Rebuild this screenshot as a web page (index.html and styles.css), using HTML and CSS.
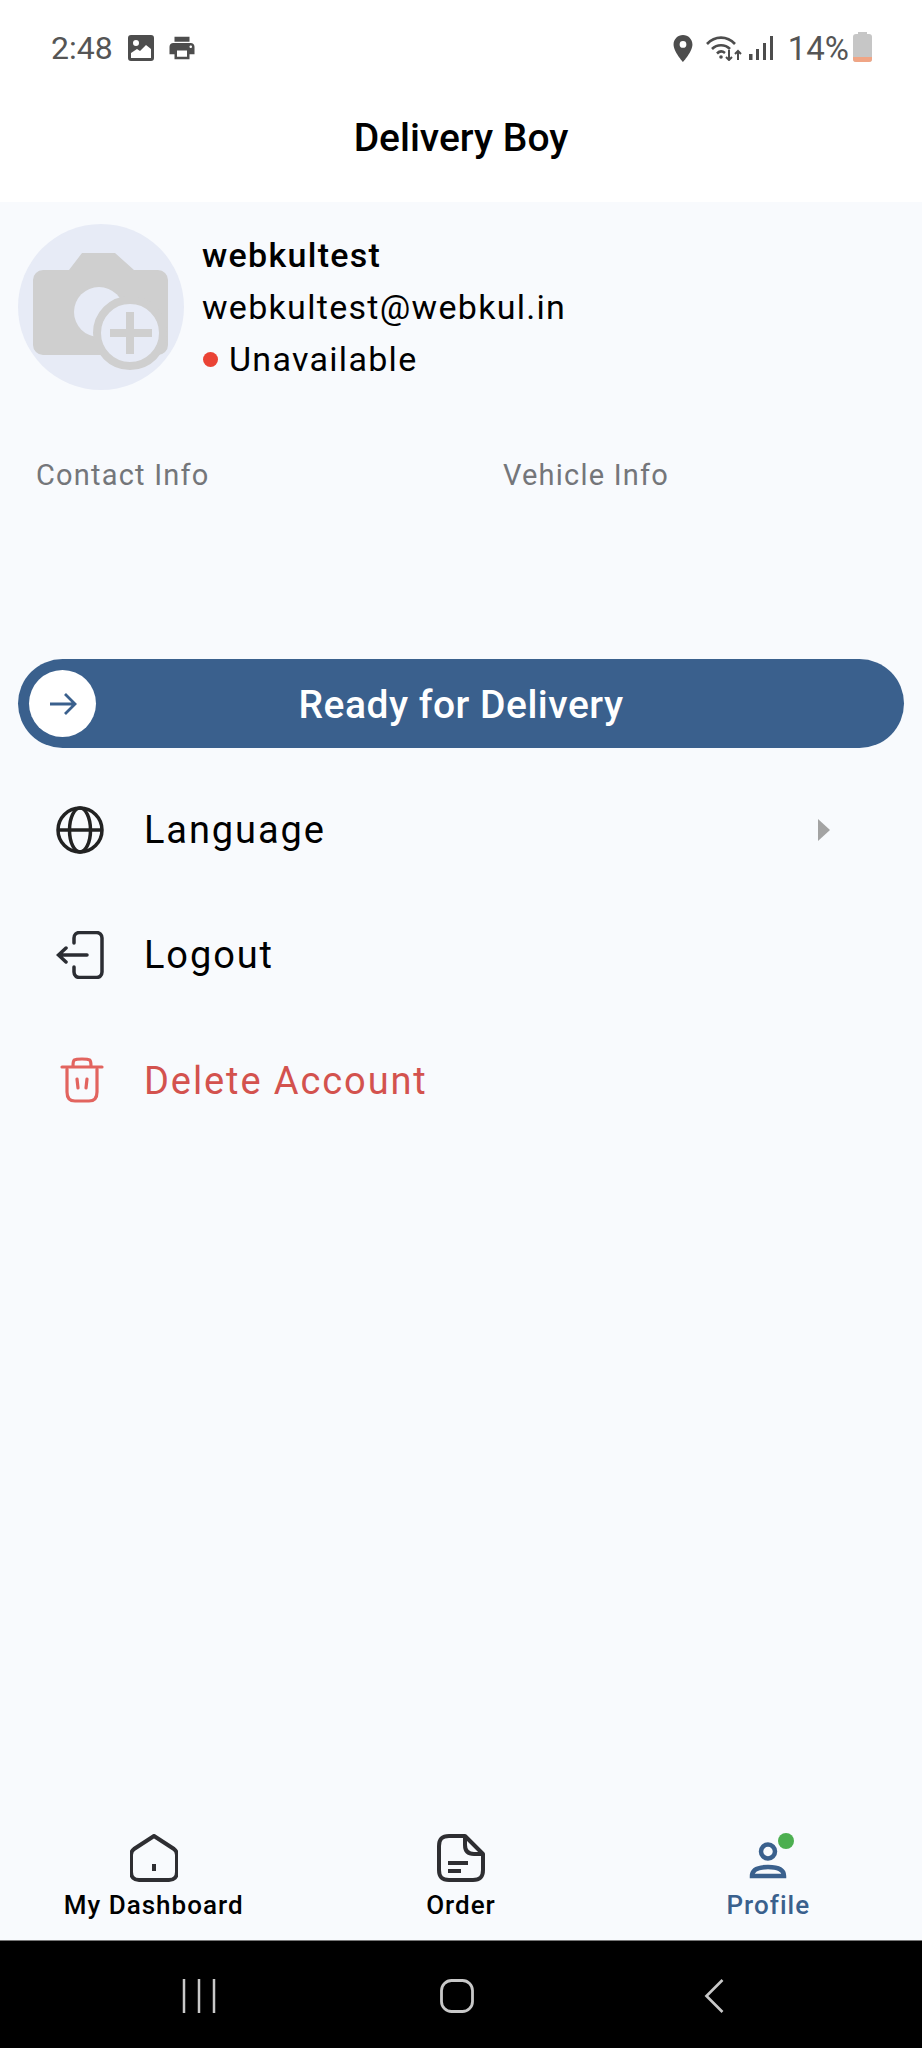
FILE: index.html
```html
<!DOCTYPE html>
<html lang="en">
<head>
    <meta charset="UTF-8">
    <meta name="viewport" content="width=device-width, initial-scale=1.0">
    <title>Delivery Boy</title>
    <link rel="stylesheet" href="styles.css">
</head>
<body>
    <header class="top">
        <div class="status">
            <span class="time">2:48</span>
            <svg class="status-icon" viewBox="0 0 26 26"><path fill="#4d4d4d" fill-rule="evenodd" d="M3 0h20a3 3 0 0 1 3 3v20a3 3 0 0 1-3 3H3a3 3 0 0 1-3-3V3a3 3 0 0 1 3-3zm5 5a3 3 0 1 0 0 6 3 3 0 0 0 0-6zM3 23h20v-9l-5-4-6 6-3-2-6 4z"/></svg>
            <svg class="status-icon print" viewBox="0 0 24 24"><path fill="#4d4d4d" d="M19 8H5c-1.66 0-3 1.34-3 3v6h4v4h12v-4h4v-6c0-1.66-1.34-3-3-3zm-3 11H8v-5h8v5zm3-7c-.55 0-1-.45-1-1s.45-1 1-1 1 .45 1 1-.45 1-1 1zm-1-9H6v4h12V3z"/></svg>
            <span class="status-gap"></span>
            <svg class="pin" viewBox="5 2 14 20"><path fill="#4d4d4d" d="M12 2C8.13 2 5 5.13 5 9c0 5.25 7 13 7 13s7-7.75 7-13c0-3.87-3.13-7-7-7zm0 9.5a2.5 2.5 0 1 1 0-5 2.5 2.5 0 0 1 0 5z"/></svg>
            <svg class="wifi" viewBox="0 0 36 26" fill="none" stroke="#4d4d4d" stroke-width="2.600">
                <path d="M1 9c8-8.500 20-8.500 28 0"/>
                <path d="M6 14c5-5 13-5 18 0"/>
                <path d="M11 18.500c2.500-2.500 5.500-2.500 8-.5"/>
                <circle cx="15" cy="22" r="1.800" fill="#4d4d4d" stroke="none"/>
                <path d="M23 15v10M20 22l3 3 3-3M32 25V16M29 19l3-3 3 3" stroke-width="2"/>
            </svg>
            <svg class="signal" viewBox="0 0 25 24"><path fill="#4d4d4d" d="M0 18h3.500v6H0zM7 13h3v11H7zM14 7h3v17h-3zM21 0h3v24h-3z"/></svg>
            <span class="battery-text">14%</span>
            <div class="battery"><span class="battery-cap"></span><span class="battery-level"></span></div>
        </div>
        <h1 class="title">Delivery Boy</h1>
    </header>

    <main class="content">
        <section class="profile">
            <div class="avatar">
                <svg viewBox="0 0 166 166">
                    <path fill="#cfcfcf" d="M25 46h26l13-17h33l19 17h24a10 10 0 0 1 10 10v65a10 10 0 0 1-10 10H25a10 10 0 0 1-10-10V56a10 10 0 0 1 10-10z"/>
                    <circle cx="81" cy="88" r="25" fill="#e7ebf6"/>
                    <circle cx="112" cy="109" r="33" fill="#e7ebf6" stroke="#cfcfcf" stroke-width="8"/>
                    <path fill="#cfcfcf" d="M92 105h16V88h8v17h18v8h-18v17h-8v-17H92z"/>
                </svg>
            </div>
            <div class="profile-text">
                <div class="name">webkultest</div>
                <div class="email">webkultest@webkul.in</div>
                <div class="state"><span class="dot"></span>Unavailable</div>
            </div>
        </section>

        <div class="info-row">
            <span class="info-label">Contact Info</span>
            <span class="info-label">Vehicle Info</span>
        </div>

        <div class="ready-btn">
            <span class="ready-knob">
                <svg viewBox="0 0 28 24" fill="none" stroke="#3a608d" stroke-width="2.800"><path d="M1 12h25M16 2l10 10-10 10"/></svg>
            </span>
            <span>Ready for Delivery</span>
        </div>

        <ul class="menu">
            <li class="menu-item">
                <svg class="menu-icon" viewBox="0 0 48 48" fill="none" stroke="#222" stroke-width="3.500">
                    <circle cx="24" cy="24" r="22"/>
                    <ellipse cx="24" cy="24" rx="10.500" ry="22"/>
                    <path d="M2 24h44"/>
                </svg>
                <span>Language</span>
                <span class="menu-arrow"></span>
            </li>
            <li class="menu-item">
                <svg class="menu-icon" viewBox="0 0 48 48" fill="none" stroke="#2b2d33" stroke-width="3.500" stroke-linecap="round">
                    <path d="M18 12V7a5.500 5.500 0 0 1 5.500-5.500h17A5.500 5.500 0 0 1 46 7v34a5.500 5.500 0 0 1-5.500 5.500h-17A5.500 5.500 0 0 1 18 41v-5"/>
                    <path d="M31 24H3M10 17l-7.500 7 7.500 7"/>
                </svg>
                <span>Logout</span>
            </li>
            <li class="menu-item danger">
                <svg class="menu-icon" viewBox="0 0 48 48" fill="none" stroke="#e2645f" stroke-width="3.200" stroke-linecap="round">
                    <path d="M6 10h40M17 9c0-7 1-7 9-7s9 0 9 7"/>
                    <path d="M11 12v23c0 6 3 9 8 9h14c5 0 8-3 8-9V12"/>
                    <path d="M21 22l1 9M31 22l-1 9"/>
                </svg>
                <span>Delete Account</span>
            </li>
        </ul>
    </main>

    <nav class="tabs">
        <div class="tab">
            <svg class="tab-icon" viewBox="0 0 48 48" fill="none" stroke="#2e2e32" stroke-width="4" stroke-linejoin="round">
                <path d="M24 2L44 15c2 1.500 3 3 3 6v17c0 5-3 8-8 8H9c-5 0-8-3-8-8V21c0-3 1-4.500 3-6z"/>
                <path d="M24 30v7" stroke-width="4"/>
            </svg>
            <span>My Dashboard</span>
        </div>
        <div class="tab">
            <svg class="tab-icon" viewBox="0 0 48 48" fill="none" stroke="#2e2e32" stroke-width="4" stroke-linejoin="round">
                <path d="M28 2H12C5 2 2 5 2 12v24c0 7 3 10 10 10h24c7 0 10-3 10-10V20z"/>
                <path d="M28 2v9c0 6 3 9 9 9h9"/>
                <path d="M11 29h20M11 37h13"/>
            </svg>
            <span>Order</span>
        </div>
        <div class="tab active">
            <span class="tab-icon profile-icon">
                <svg viewBox="0 0 48 48" fill="none" stroke="#3a608d" stroke-width="4.500">
                    <circle cx="24" cy="17.500" r="7"/>
                    <path d="M8 42c0-6 6-9 16-9s16 3 16 9z"/>
                </svg>
                <span class="badge"></span>
            </span>
            <span>Profile</span>
        </div>
    </nav>

    <div class="sys-nav">
        <svg class="sys-icon" viewBox="0 0 34 34" fill="none" stroke="#c8c8c8" stroke-width="2.500"><path d="M2 0v34M17 0v34M32 0v34"/></svg>
        <svg class="sys-icon" viewBox="0 0 34 34" fill="none" stroke="#c8c8c8" stroke-width="2.800"><rect x="1.500" y="1.500" width="31" height="31" rx="10"/></svg>
        <svg class="sys-icon" viewBox="0 0 34 36" fill="none" stroke="#c8c8c8" stroke-width="2.800"><path d="M26 1L9 18l17 17"/></svg>
    </div>
</body>
</html>
```

FILE: styles.css
```css
* {
    box-sizing: border-box;
}

body {
    font-family: Roboto, "Liberation Sans", sans-serif;
    margin: 0;
    padding: 0;
    height: 2048px;
    display: flex;
    flex-direction: column;
    background: #f8fafd;
    color: #000;
}

.top {
    background: #fff;
    height: 202px;
}

.status {
    display: flex;
    align-items: center;
    height: 96px;
    padding: 0 50px 0 51px;
    color: #555;
}

.time {
    font-size: 32px;
    margin-right: 15px;
}

.status-icon {
    width: 26px;
    height: 26px;
}

.status-icon.print {
    margin-left: 13px;
    width: 30px;
    height: 30px;
}

.status-gap {
    flex: 1;
}

.pin {
    width: 22px;
    height: 27px;
    margin-right: 12px;
}

.wifi {
    width: 36px;
    height: 26px;
    margin-right: 7px;
}

.signal {
    width: 25px;
    height: 24px;
    margin-right: 14px;
}

.battery-text {
    font-size: 33px;
    margin-right: 4px;
}

.battery {
    width: 19px;
    height: 28px;
    background: #c6c6c6;
    border-radius: 3px;
    position: relative;
    overflow: visible;
}

.battery-cap {
    position: absolute;
    top: -2px;
    left: 5px;
    width: 9px;
    height: 3px;
    background: #c6c6c6;
}

.battery-level {
    position: absolute;
    left: 0;
    right: 0;
    bottom: 0;
    height: 5px;
    background: #f0a585;
    border-radius: 0 0 3px 3px;
}

.title {
    margin: 0;
    text-align: center;
    font-size: 39px;
    font-weight: 500;
    line-height: 84px;
}

.content {
    flex: 1;
}

.profile {
    display: flex;
    align-items: center;
    padding: 22px 18px 0;
}

.avatar {
    width: 166px;
    height: 166px;
    border-radius: 50%;
    background: #e7ebf6;
    margin-right: 18px;
}

.avatar svg {
    display: block;
    width: 166px;
    height: 166px;
}

.profile-text {
    font-size: 34px;
    line-height: 52px;
    letter-spacing: 1.300px;
}

.name {
    font-weight: 500;
}

.state {
    display: flex;
    align-items: center;
}

.dot {
    width: 15px;
    height: 15px;
    border-radius: 50%;
    background: #ea4335;
    margin: 0 11px 0 1px;
}

.info-row {
    display: grid;
    grid-template-columns: 467px 1fr;
    margin-top: 65px;
    padding-left: 36px;
}

.info-label {
    font-size: 29px;
    line-height: 40px;
    letter-spacing: 1.200px;
    color: #74767a;
}

.ready-btn {
    position: relative;
    margin: 164px 18px 0;
    height: 89px;
    border-radius: 45px;
    background: #3a608d;
    color: #fff;
    font-size: 39px;
    font-weight: 500;
    letter-spacing: 0.500px;
    padding-top: 3px;
    display: flex;
    align-items: center;
    justify-content: center;
}

.ready-knob {
    position: absolute;
    left: 11px;
    top: 11px;
    width: 67px;
    height: 67px;
    border-radius: 50%;
    background: #fff;
    display: flex;
    align-items: center;
    justify-content: center;
}

.ready-knob svg {
    width: 28px;
    height: 24px;
}

.menu {
    list-style: none;
    margin: 19px 0 0;
    padding: 0 56px;
}

.menu-item {
    display: flex;
    align-items: center;
    height: 125.500px;
    font-size: 38px;
    letter-spacing: 1.900px;
}

.menu-item.danger {
    color: #d3524e;
}

.menu-icon {
    width: 48px;
    height: 48px;
    margin-right: 40px;
}

.menu-arrow {
    margin-left: auto;
    margin-right: 36px;
    border-left: 12px solid #a3a3a3;
    border-top: 11px solid transparent;
    border-bottom: 11px solid transparent;
}

.tabs {
    display: grid;
    grid-template-columns: repeat(3, 1fr);
    height: 120px;
}

.tab {
    display: flex;
    flex-direction: column;
    align-items: center;
    padding-top: 14px;
    font-size: 26px;
    font-weight: 500;
    letter-spacing: 1px;
    line-height: 46px;
}

.tab.active {
    color: #3a608d;
}

.tab-icon {
    display: block;
    width: 48px;
    height: 48px;
    flex: none;
}

.profile-icon {
    position: relative;
}

.profile-icon svg {
    display: block;
}

.badge {
    position: absolute;
    top: -1px;
    right: -2px;
    width: 16px;
    height: 16px;
    border-radius: 50%;
    background: #4caf50;
}

.sys-nav {
    height: 108px;
    background: #000;
    border-top: 1px solid #777;
    display: grid;
    grid-template-columns: 182px 34px 224px 34px 223px 34px;
    align-items: center;
    padding-top: 3px;
}

.sys-icon {
    width: 34px;
    height: 34px;
}

.sys-icon:nth-child(1) {
    grid-column: 2;
}

.sys-icon:nth-child(2) {
    grid-column: 4;
}

.sys-icon:nth-child(3) {
    grid-column: 6;
}
```
